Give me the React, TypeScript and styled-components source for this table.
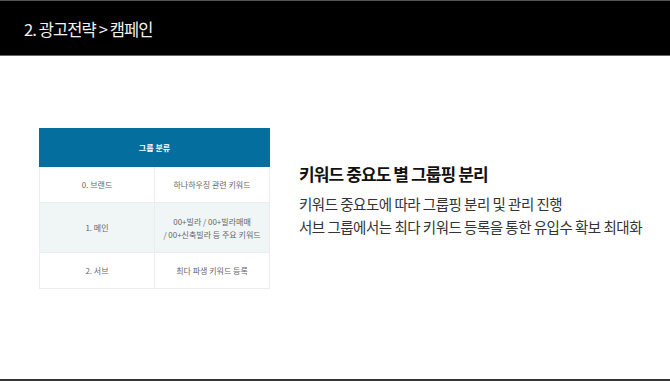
import styled, { createGlobalStyle } from 'styled-components';

const GlobalStyle = createGlobalStyle`
  html, body {
    margin: 0;
    padding: 0;
    background: #fff;
  }
  body {
    font-family: "Noto Sans CJK KR", "Noto Sans", sans-serif;
  }
`;

const Page = styled.div`
  width: 670px;
  height: 381px;
  display: flex;
  flex-direction: column;
  box-sizing: border-box;
  border-bottom: 2px solid #333;
`;

const Header = styled.header`
  height: 56px;
  box-sizing: border-box;
  background: #000;
  border-top: 1px solid #555;
  border-bottom: 1px solid #666;
  display: flex;
  align-items: center;
  padding-left: 24px;
`;

const HeaderTitle = styled.h1`
  margin: 0;
  color: #f2f2f2;
  font-size: 16.5px;
  font-weight: 400;
  letter-spacing: -0.9px;
  padding-top: 2px;
`;

const Main = styled.main`
  flex: 1;
  display: flex;
  align-items: flex-start;
  gap: 29px;
  padding: 72px 0 0 39px;
`;

const Table = styled.table`
  width: 231px;
  border-collapse: collapse;
  table-layout: fixed;
  font-size: 8px;
  color: #666;
`;

const HeadCell = styled.th`
  height: 37px;
  padding: 0;
  background: #046f9e;
  color: #fff;
  font-weight: 700;
  font-size: 8px;
  border: 1px solid #046f9e;
`;

const Row = styled.tr<{ $shade?: boolean }>`
  background: ${p => (p.$shade ? '#f0f5f6' : '#fff')};
`;

const Cell = styled.td<{ $tall?: boolean }>`
  height: ${p => (p.$tall ? '49px' : '35px')};
  padding: 0;
  text-align: center;
  line-height: 13px;
  border: 1px solid #ececec;
`;

const TextBlock = styled.div`
  margin-top: 33px;
  color: #333;
`;

const Title = styled.h2`
  margin: 0 0 6px;
  font-size: 17px;
  font-weight: 700;
  color: #111;
  letter-spacing: -0.9px;
`;

const Line = styled.p`
  margin: 0;
  font-size: 14.5px;
  line-height: 23px;
  letter-spacing: -0.5px;
`;

const rows = [
  { name: '0. 브랜드', desc: ['하나하우징 관련 키워드'] },
  { name: '1. 메인', desc: ['00+빌라 / 00+빌라매매', '/ 00+신축빌라 등 주요 키워드'], shade: true },
  { name: '2. 서브', desc: ['최다 파생 키워드 등록'] },
];

const App = () => {
  return (
    <>
      <GlobalStyle />
      <Page>
        <Header>
          <HeaderTitle>2. 광고전략 &gt; 캠페인</HeaderTitle>
        </Header>
        <Main>
          <Table>
            <thead>
              <tr>
                <HeadCell colSpan={2}>그룹 분류</HeadCell>
              </tr>
            </thead>
            <tbody>
              {rows.map(r => (
                <Row key={r.name} $shade={r.shade}>
                  <Cell $tall={r.desc.length > 1}>{r.name}</Cell>
                  <Cell $tall={r.desc.length > 1}>
                    {r.desc.map(d => (
                      <div key={d}>{d}</div>
                    ))}
                  </Cell>
                </Row>
              ))}
            </tbody>
          </Table>
          <TextBlock>
            <Title>키워드 중요도 별 그룹핑 분리</Title>
            <Line>키워드 중요도에 따라 그룹핑 분리 및 관리 진행</Line>
            <Line>서브 그룹에서는 최다 키워드 등록을 통한 유입수 확보 최대화</Line>
          </TextBlock>
        </Main>
      </Page>
    </>
  );
};

export default App;
